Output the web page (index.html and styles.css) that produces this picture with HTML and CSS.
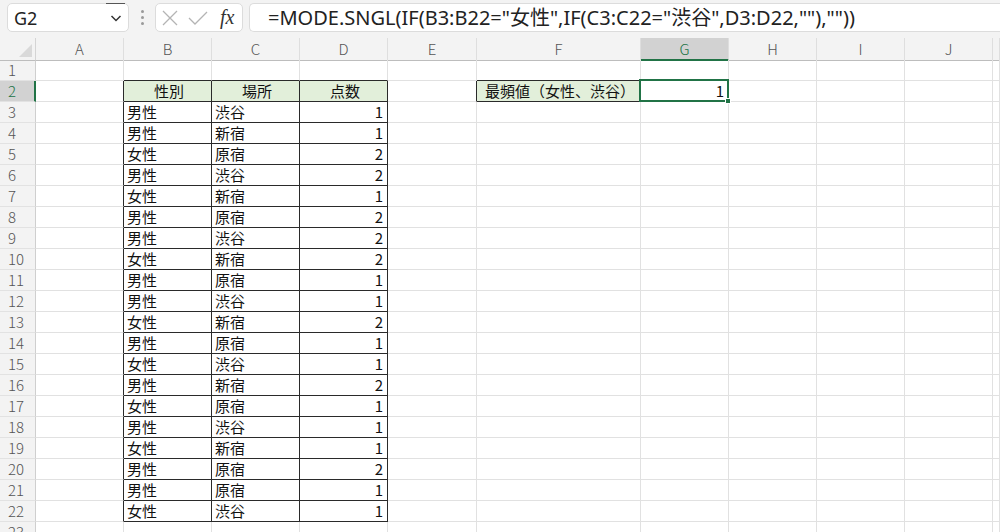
FILE: index.html
```html
<!DOCTYPE html>
<html lang="ja">
<head>
<meta charset="utf-8">
<title>Excel</title>
<link rel="stylesheet" href="styles.css">
</head>
<body>
<div class="app">
  <div class="fbar">
    <div class="namebox">
      <span class="nb-text">G2</span>
      <span class="nb-mark"></span>
      <svg class="nb-arrow" width="14" height="10" viewBox="0 0 14 10"><path d="M2.5 3 L7 7.5 L11.5 3" fill="none" stroke="#333" stroke-width="1.5"/></svg>
    </div>
    <div class="dots"><span></span><span></span><span></span></div>
    <div class="fxbox">
      <svg width="20" height="20" viewBox="0 0 20 20"><path d="M3 3 L17 17 M17 3 L3 17" fill="none" stroke="#b4b4b4" stroke-width="1.3"/></svg>
      <svg width="22" height="20" viewBox="0 0 22 20"><path d="M2 10 L8 16 L20 4" fill="none" stroke="#b4b4b4" stroke-width="1.3"/></svg>
      <span class="fx">fx</span>
    </div>
    <div class="formula">=MODE.SNGL(IF(B3:B22="女性",IF(C3:C22="渋谷",D3:D22,""),""))</div>
  </div>

  <div class="sheet">
    <div class="row colhead">
      <div class="corner"><span class="tri"></span></div>
      <div class="ch">A</div><div class="ch">B</div><div class="ch">C</div><div class="ch">D</div><div class="ch">E</div><div class="ch">F</div><div class="ch chsel">G</div><div class="ch">H</div><div class="ch">I</div><div class="ch">J</div><div class="ch"></div>
    </div>

    <div class="row"><div class="rh">1</div><div class="c"></div><div class="c bb"></div><div class="c bb"></div><div class="c bb"></div><div class="c"></div><div class="c bb"></div><div class="c"></div><div class="c"></div><div class="c"></div><div class="c"></div><div class="c"></div></div>
    <div class="row"><div class="rh rhsel">2</div><div class="c lb"></div><div class="c t hd">性別</div><div class="c t hd">場所</div><div class="c t hd">点数</div><div class="c lb"></div><div class="c t hd hl">最頻値（女性、渋谷）</div><div class="c sel num">1<span class="handle"></span></div><div class="c"></div><div class="c"></div><div class="c"></div><div class="c"></div></div>
    <div class="row"><div class="rh">3</div><div class="c lb"></div><div class="c t">男性</div><div class="c t">渋谷</div><div class="c t num">1</div><div class="c"></div><div class="c"></div><div class="c"></div><div class="c"></div><div class="c"></div><div class="c"></div><div class="c"></div></div>
    <div class="row"><div class="rh">4</div><div class="c lb"></div><div class="c t">男性</div><div class="c t">新宿</div><div class="c t num">1</div><div class="c"></div><div class="c"></div><div class="c"></div><div class="c"></div><div class="c"></div><div class="c"></div><div class="c"></div></div>
    <div class="row"><div class="rh">5</div><div class="c lb"></div><div class="c t">女性</div><div class="c t">原宿</div><div class="c t num">2</div><div class="c"></div><div class="c"></div><div class="c"></div><div class="c"></div><div class="c"></div><div class="c"></div><div class="c"></div></div>
    <div class="row"><div class="rh">6</div><div class="c lb"></div><div class="c t">男性</div><div class="c t">渋谷</div><div class="c t num">2</div><div class="c"></div><div class="c"></div><div class="c"></div><div class="c"></div><div class="c"></div><div class="c"></div><div class="c"></div></div>
    <div class="row"><div class="rh">7</div><div class="c lb"></div><div class="c t">女性</div><div class="c t">新宿</div><div class="c t num">1</div><div class="c"></div><div class="c"></div><div class="c"></div><div class="c"></div><div class="c"></div><div class="c"></div><div class="c"></div></div>
    <div class="row"><div class="rh">8</div><div class="c lb"></div><div class="c t">男性</div><div class="c t">原宿</div><div class="c t num">2</div><div class="c"></div><div class="c"></div><div class="c"></div><div class="c"></div><div class="c"></div><div class="c"></div><div class="c"></div></div>
    <div class="row"><div class="rh">9</div><div class="c lb"></div><div class="c t">男性</div><div class="c t">渋谷</div><div class="c t num">2</div><div class="c"></div><div class="c"></div><div class="c"></div><div class="c"></div><div class="c"></div><div class="c"></div><div class="c"></div></div>
    <div class="row"><div class="rh">10</div><div class="c lb"></div><div class="c t">女性</div><div class="c t">新宿</div><div class="c t num">2</div><div class="c"></div><div class="c"></div><div class="c"></div><div class="c"></div><div class="c"></div><div class="c"></div><div class="c"></div></div>
    <div class="row"><div class="rh">11</div><div class="c lb"></div><div class="c t">男性</div><div class="c t">原宿</div><div class="c t num">1</div><div class="c"></div><div class="c"></div><div class="c"></div><div class="c"></div><div class="c"></div><div class="c"></div><div class="c"></div></div>
    <div class="row"><div class="rh">12</div><div class="c lb"></div><div class="c t">男性</div><div class="c t">渋谷</div><div class="c t num">1</div><div class="c"></div><div class="c"></div><div class="c"></div><div class="c"></div><div class="c"></div><div class="c"></div><div class="c"></div></div>
    <div class="row"><div class="rh">13</div><div class="c lb"></div><div class="c t">女性</div><div class="c t">新宿</div><div class="c t num">2</div><div class="c"></div><div class="c"></div><div class="c"></div><div class="c"></div><div class="c"></div><div class="c"></div><div class="c"></div></div>
    <div class="row"><div class="rh">14</div><div class="c lb"></div><div class="c t">男性</div><div class="c t">原宿</div><div class="c t num">1</div><div class="c"></div><div class="c"></div><div class="c"></div><div class="c"></div><div class="c"></div><div class="c"></div><div class="c"></div></div>
    <div class="row"><div class="rh">15</div><div class="c lb"></div><div class="c t">女性</div><div class="c t">渋谷</div><div class="c t num">1</div><div class="c"></div><div class="c"></div><div class="c"></div><div class="c"></div><div class="c"></div><div class="c"></div><div class="c"></div></div>
    <div class="row"><div class="rh">16</div><div class="c lb"></div><div class="c t">男性</div><div class="c t">新宿</div><div class="c t num">2</div><div class="c"></div><div class="c"></div><div class="c"></div><div class="c"></div><div class="c"></div><div class="c"></div><div class="c"></div></div>
    <div class="row"><div class="rh">17</div><div class="c lb"></div><div class="c t">女性</div><div class="c t">原宿</div><div class="c t num">1</div><div class="c"></div><div class="c"></div><div class="c"></div><div class="c"></div><div class="c"></div><div class="c"></div><div class="c"></div></div>
    <div class="row"><div class="rh">18</div><div class="c lb"></div><div class="c t">男性</div><div class="c t">渋谷</div><div class="c t num">1</div><div class="c"></div><div class="c"></div><div class="c"></div><div class="c"></div><div class="c"></div><div class="c"></div><div class="c"></div></div>
    <div class="row"><div class="rh">19</div><div class="c lb"></div><div class="c t">女性</div><div class="c t">新宿</div><div class="c t num">1</div><div class="c"></div><div class="c"></div><div class="c"></div><div class="c"></div><div class="c"></div><div class="c"></div><div class="c"></div></div>
    <div class="row"><div class="rh">20</div><div class="c lb"></div><div class="c t">男性</div><div class="c t">原宿</div><div class="c t num">2</div><div class="c"></div><div class="c"></div><div class="c"></div><div class="c"></div><div class="c"></div><div class="c"></div><div class="c"></div></div>
    <div class="row"><div class="rh">21</div><div class="c lb"></div><div class="c t">男性</div><div class="c t">原宿</div><div class="c t num">1</div><div class="c"></div><div class="c"></div><div class="c"></div><div class="c"></div><div class="c"></div><div class="c"></div><div class="c"></div></div>
    <div class="row"><div class="rh">22</div><div class="c lb"></div><div class="c t">女性</div><div class="c t">渋谷</div><div class="c t num">1</div><div class="c"></div><div class="c"></div><div class="c"></div><div class="c"></div><div class="c"></div><div class="c"></div><div class="c"></div></div>
    <div class="row"><div class="rh">23</div><div class="c"></div><div class="c"></div><div class="c"></div><div class="c"></div><div class="c"></div><div class="c"></div><div class="c"></div><div class="c"></div><div class="c"></div><div class="c"></div><div class="c"></div></div>
  </div>
</div>
</body>
</html>
```

FILE: styles.css
```css
* { box-sizing: border-box; }
html, body {
  margin: 0;
  padding: 0;
  width: 1000px;
  height: 532px;
  overflow: hidden;
  background: #ffffff;
}
.app {
  font-family: "Noto Sans CJK JP", "Noto Sans", sans-serif;
  color: #222;
}

/* ---------- formula bar ---------- */
.fbar {
  height: 38px;
  background: #f3f3f3;
  display: flex;
  align-items: flex-start;
  padding: 3px 0 0 7px;
}
.namebox {
  position: relative;
  width: 122px;
  height: 29px;
  background: #fff;
  border: 1px solid #dcdcdc;
  border-radius: 5px;
  display: flex;
  align-items: center;
  padding-left: 6px;
}
.nb-text {
  font-family: "Noto Sans", sans-serif;
  font-size: 18px;
  color: #222;
  flex: 1;
  line-height: 20px;
}
.nb-arrow { margin-right: 5px; }
.nb-mark {
  position: absolute;
  top: -1px;
  right: 3px;
  width: 19px;
  height: 1px;
  background: #555;
}
.dots {
  width: 26px;
  height: 29px;
  display: flex;
  flex-direction: column;
  align-items: center;
  justify-content: center;
  gap: 3px;
}
.dots span {
  width: 3px;
  height: 3px;
  border-radius: 50%;
  background: #9a9a9a;
}
.fxbox {
  width: 88px;
  height: 29px;
  background: #fff;
  border: 1px solid #dcdcdc;
  border-radius: 5px;
  display: flex;
  align-items: center;
  gap: 7px;
  padding-left: 4px;
}
.fx {
  font-family: "Liberation Serif", serif;
  font-style: italic;
  font-size: 20px;
  color: #333;
  margin-left: 4px;
}
.formula {
  margin-left: 6px;
  flex: 1;
  height: 29px;
  background: #fff;
  border: 1px solid #dcdcdc;
  border-right: none;
  border-radius: 5px 0 0 5px;
  font-family: "Noto Sans", "Noto Sans CJK JP", sans-serif;
  font-size: 20px;
  line-height: 27px;
  padding-left: 18px;
  color: #222;
  white-space: nowrap;
}

/* ---------- sheet grid ---------- */
.row {
  display: grid;
  grid-template-columns: 36px 88px 88px 88px 88px 89px 164px 88px 88px 88px 88px 1fr;
  height: 21px;
}
.colhead {
  height: 22px;
  background: #f3f3f3;
}
.corner {
  position: relative;
  border-right: 1px solid #d4d4d4;
  border-bottom: 1px solid #bdbdbd;
}
.tri {
  position: absolute;
  right: 3px;
  bottom: 3px;
  width: 0;
  height: 0;
  border-left: 13px solid transparent;
  border-bottom: 13px solid #d9d9d9;
}
.ch {
  border-right: 1px solid #dedede;
  border-bottom: 1px solid #bdbdbd;
  text-align: center;
  font-size: 15px;
  line-height: 21px;
  color: #555;
  font-weight: 300;
}
.chsel {
  background: #d2d2d2;
  color: #217346;
  border-bottom: 2px solid #217346;
}
.rh {
  background: #f3f3f3;
  border-right: 1px solid #cfcfcf;
  border-bottom: 1px solid #e2e2e2;
  font-size: 15px;
  line-height: 20px;
  color: #555;
  padding-left: 8px;
  font-weight: 300;
}
.rhsel {
  background: #d2d2d2;
  color: #217346;
  border-right: 2px solid #217346;
}
.c {
  position: relative;
  border-right: 1px solid #e1e1e1;
  border-bottom: 1px solid #e1e1e1;
  font-size: 15px;
  line-height: 20px;
  color: #111;
  padding-left: 3px;
  white-space: nowrap;
}
.c.t {
  border-right: 1px solid #2a2a2a;
  border-bottom: 1px solid #2a2a2a;
}
.c.lb { border-right: 1px solid #2a2a2a; }
.c.bb { border-bottom: 1px solid #2a2a2a; }
.c.hd {
  background: #e2efda;
  text-align: center;
}
.c.hl {
  text-align: left;
  padding-left: 8px;
}
.c.num {
  text-align: right;
  padding-right: 4px;
}
.c.sel::after {
  content: "";
  position: absolute;
  left: -2px;
  top: -2px;
  right: -1px;
  bottom: -1px;
  border: 2px solid #217346;
}
.handle {
  position: absolute;
  right: -3px;
  bottom: -3px;
  width: 6px;
  height: 6px;
  background: #217346;
  border: 1px solid #fff;
  z-index: 2;
}
```
